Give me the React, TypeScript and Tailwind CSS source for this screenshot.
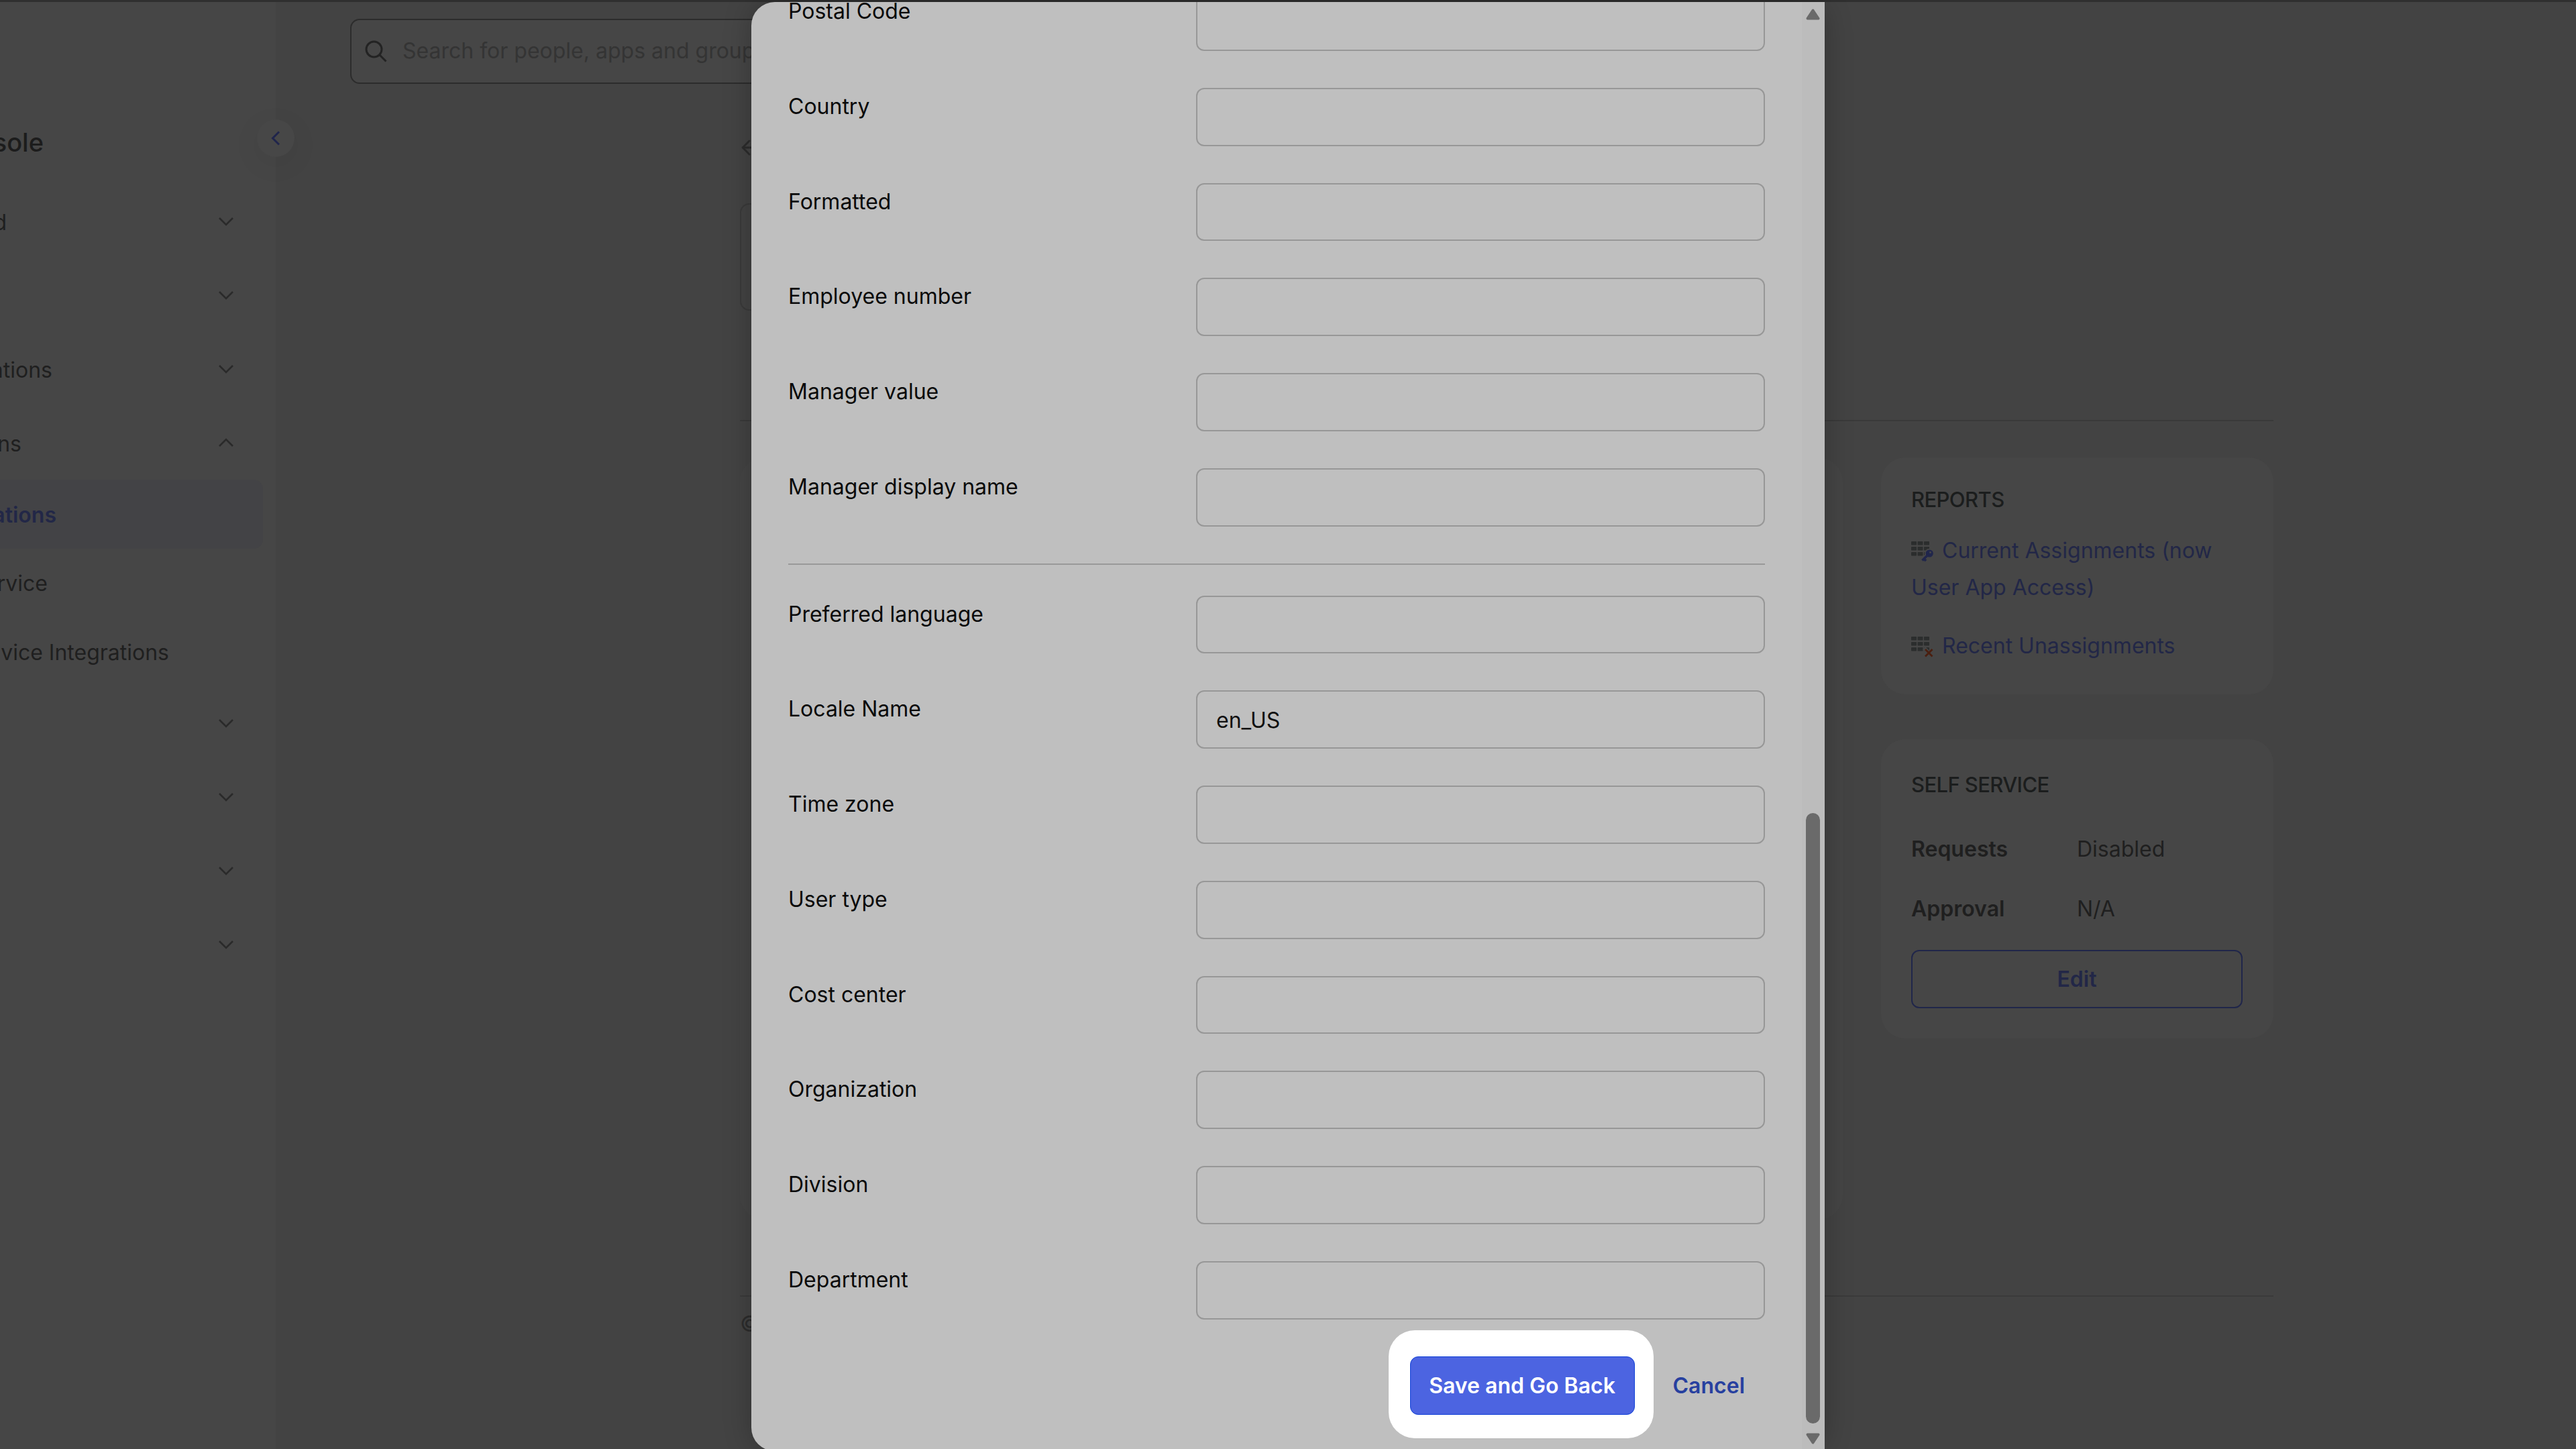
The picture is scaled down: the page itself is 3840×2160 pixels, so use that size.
import { ArrowLeft } from 'lucide-react';
import type { ReactNode } from 'react';

type NavItem = { label: string; labelWidth: string; open?: boolean };

const topItems: NavItem[] = [
  { label: 'd', labelWidth: 'w-[10px]' },
  { label: '', labelWidth: 'w-[10px]' },
  { label: 'ations', labelWidth: 'w-[78px]' },
  { label: 'ns', labelWidth: 'w-[32px]', open: true },
];

const subItems = [
  { label: 'ations', labelWidth: 'w-[84px]', active: true },
  { label: 'rvice', labelWidth: 'w-[71px]', active: false },
  { label: 'vice Integrations', labelWidth: 'w-[252px]', active: false },
];

const addressFields = ['Country', 'Formatted', 'Employee number', 'Manager value', 'Manager display name'];

const profileFields = [
  { label: 'Preferred language', value: '' },
  { label: 'Locale Name', value: 'en_US' },
  { label: 'Time zone', value: '' },
  { label: 'User type', value: '' },
  { label: 'Cost center', value: '' },
  { label: 'Organization', value: '' },
  { label: 'Division', value: '' },
  { label: 'Department', value: '' },
];

function Chevron({ open = false }: { open?: boolean }) {
  return (
    <svg width="24" height="14" viewBox="0 0 24 14" fill="none" stroke="#2a2a2a" strokeWidth="2.6">
      <path d={open ? 'M2 12 L12 2 L22 12' : 'M2 2 L12 12 L22 2'} />
    </svg>
  );
}

// Right aligned, so that the start of a long label slides out of view
function ClippedLabel({ width, className = '', children }: { width: string; className?: string; children: ReactNode }) {
  return (
    <span className={`flex shrink-0 justify-end overflow-hidden whitespace-nowrap ${width} ${className}`}>
      <span>{children}</span>
    </span>
  );
}

function NavRow({ label, labelWidth, open }: NavItem) {
  return (
    <div className="flex h-[110px] items-center justify-between pr-[62px]">
      <ClippedLabel width={labelWidth} className="pt-[3px] text-[#1f1f1f]">{label}</ClippedLabel>
      <Chevron open={open} />
    </div>
  );
}

function Sidebar() {
  return (
    <aside className="relative w-[411px] shrink-0 bg-[#464646]">
      <div className="flex h-[272px] items-start pt-[183px]">
        <ClippedLabel width="w-[65px]" className="text-[38px] leading-[52px] font-medium text-[#1c1c1c]">sole</ClippedLabel>
      </div>
      {topItems.map((item, i) => (
        <NavRow key={i} {...item} />
      ))}
      <div>
        {subItems.map((item, i) => (
          <div
            key={i}
            className={`mr-[19px] flex h-[102.5px] items-center rounded-r-[14px] ${item.active ? 'bg-[#434346] font-semibold text-[#222747]' : 'text-[#1f1f1f]'}`}
          >
            <ClippedLabel width={item.labelWidth} className="pt-[3px]">{item.label}</ClippedLabel>
          </div>
        ))}
      </div>
      {[0, 1, 2, 3].map((i) => (
        <NavRow key={i} label="" labelWidth="w-[10px]" />
      ))}

      <button className="absolute top-[175px] -right-[28px] z-10 flex size-14 items-center justify-center rounded-full bg-[#474747] shadow-[0_10px_40px_6px_rgba(0,0,0,0.04)]">
        <svg width="14" height="22" viewBox="0 0 14 22" fill="none" stroke="#20254c" strokeWidth="3">
          <path d="M12 1.5 L2.5 11 L12 20.5" />
        </svg>
      </button>
    </aside>
  );
}

function GridIcon({ children }: { children: ReactNode }) {
  return (
    <svg className="mr-[13px] inline-block align-[-6px]" width="33" height="31" viewBox="0 0 33 31">
      {[0, 8, 16].map((y) =>
        [0, 9.5, 19].map((x) => <rect key={`${x}-${y}`} x={x} y={y} width="8" height="5.5" rx="0.8" fill="#2b2d2d" />),
      )}
      {children}
    </svg>
  );
}

function SideCard({ title, className, children }: { title: string; className: string; children: ReactNode }) {
  return (
    <section className={`w-[585px] rounded-[36px] bg-[#464646] px-[45px] ${className}`}>
      <h3 className="text-[31px] leading-[40px] font-medium tracking-[-0.6px] text-[#1b1d1d]">{title}</h3>
      {children}
    </section>
  );
}

function MainContent() {
  return (
    <main className="flex min-w-0 flex-1 flex-col bg-[#434343]">
      <div className="mt-[25px] ml-[111px] flex h-[97px] w-[900px] items-center rounded-[14px] border-2 border-[#2c2c2c] bg-[#464646] pl-5">
        <svg width="33" height="33" viewBox="0 0 33 33" fill="none" stroke="#232323" strokeWidth="3">
          <circle cx="13.5" cy="13.5" r="11.5" />
          <path d="M21.5 21.5 L31.5 31.5" />
        </svg>
        <span className="ml-[23px] pb-[2px] whitespace-nowrap text-[#343434]">Search for people, apps and groups</span>
      </div>

      <div className="ml-[692px] w-[2286px]">
        <ArrowLeft className="mt-[78px] -ml-[3px] h-[34px] w-[34px] text-[#2c2c2c]" />
        <div className="mt-[66px] h-[160px] w-[1600px] rounded-[14px] border-2 border-[#3a3a3a]" />
        <hr className="mt-[163px] border-t-2 border-[#3a3a3a]" />
        <div className="mt-[54px] flex h-[1249px] justify-between">
          <div className="h-[1136px] w-[1644px] rounded-[36px] bg-[#454545]" />
          <div className="flex flex-col gap-[67px]">
            <SideCard title="REPORTS" className="h-[353px] pt-[43px]">
              <p className="mt-[28px] leading-[55px] text-[#222747]">
                <GridIcon>
                  <circle cx="27" cy="18" r="7.2" fill="#464646" />
                  <path d="M26 19 L17 28" stroke="#464646" strokeWidth="7" />
                  <circle cx="27.2" cy="18" r="5.6" fill="#20264c" />
                  <path d="M26 19 L16.5 28.5 M19 26 L22 29" stroke="#20264c" strokeWidth="3.6" />
                  <circle cx="28.5" cy="16.5" r="1.4" fill="#464646" />
                </GridIcon>
                Current Assignments (now User App Access)
              </p>
              <p className="mt-8 leading-[55px] whitespace-nowrap text-[#222747]">
                <GridIcon>
                  <path d="M19 17 L26 24" stroke="#464646" strokeWidth="6" />
                  <path d="M21 19 L31.5 29.5 M31.5 19 L21 29.5" stroke="#4a1f10" strokeWidth="2.8" />
                </GridIcon>
                Recent Unassignments
              </p>
            </SideCard>

            <SideCard title="SELF SERVICE" className="h-[446px] pt-[48px] text-[#1f1f1f]">
              <div className="mt-[51px] flex h-[50px] items-center">
                <span className="w-[247px] font-semibold">Requests</span>
                <span>Disabled</span>
              </div>
              <div className="mt-[39px] flex h-[50px] items-center">
                <span className="w-[247px] font-semibold">Approval</span>
                <span>N/A</span>
              </div>
              <button className="mt-9 h-[87px] w-[494px] rounded-xl border-2 border-[#20264a] font-semibold text-[#222747]">Edit</button>
            </SideCard>
          </div>
        </div>
        <hr className="border-t-2 border-[#3a3a3a]" />
        <p className="mt-[19px] leading-[44px] text-[#2c2c2c]">©</p>
      </div>
    </main>
  );
}

function Field({ label, value = '' }: { label: string; value?: string }) {
  return (
    <div className="flex h-[86.75px] shrink-0 justify-between">
      <label className="pt-[6px] leading-[44px] text-[#0a0a0a]">{label}</label>
      <input
        readOnly
        value={value}
        className="h-full w-[848px] rounded-xl border-2 border-[#979797] px-7 pt-px text-[#101010] outline-none"
      />
    </div>
  );
}

function ScrollBar() {
  return (
    <div className="flex w-[34px] shrink-0 flex-col items-center bg-[#bcbcbc] pt-[10px] pr-px">
      <svg width="21" height="17" viewBox="0 0 21 17" fill="#6a6a6a" stroke="#6a6a6a" strokeWidth="4" strokeLinejoin="round">
        <path d="M10.5 2.5 L18.5 14.5 L2.5 14.5 Z" />
      </svg>
      <div className="mt-[1182px] h-[910px] w-[21px] rounded-full bg-[#6a6a6a]" />
      <svg className="mt-[14px]" width="21" height="17" viewBox="0 0 21 17" fill="#6a6a6a" stroke="#6a6a6a" strokeWidth="4" strokeLinejoin="round">
        <path d="M10.5 14.5 L18.5 2.5 L2.5 2.5 Z" />
      </svg>
    </div>
  );
}

function AssignDialog() {
  return (
    <div className="absolute top-[3px] left-[1120px] flex h-[2160px] w-[1600px] overflow-hidden rounded-l-[35px] bg-[#bfbfbf]">
      <div className="-mt-[14px] flex flex-1 flex-col gap-[55px] pr-[55px] pl-[55px]">
        <Field label="Postal Code" />
        {addressFields.map((label) => (
          <Field key={label} label={label} />
        ))}
        <hr className="shrink-0 border-t-2 border-[#999999]" />
        <div className="-mt-[9px] flex flex-col gap-[55px]">
          {profileFields.map((field) => (
            <Field key={field.label} {...field} />
          ))}
        </div>
        <div className="-mt-[39px] flex items-center justify-end pr-[30px] font-semibold">
          <div className="mr-[29px] rounded-[39px] bg-white pt-[39px] pr-[28px] pb-[35px] pl-8">
            <button className="h-[87px] w-[335px] rounded-xl border border-[#0d3ed6] bg-[#4c64e1] pt-px text-white">Save and Go Back</button>
          </div>
          <button className="pt-[5px] text-[#27409f]">Cancel</button>
        </div>
      </div>
      <ScrollBar />
    </div>
  );
}

export default function App() {
  return (
    <div className="relative h-[2160px] w-[3840px] overflow-hidden bg-[#2f2f2f] pt-[3px] font-['Inter',sans-serif] text-[32px]">
      <div className="flex h-full">
        <Sidebar />
        <MainContent />
      </div>
      <div className="absolute top-[3px] left-[1120px] h-[2160px] w-[1600px] rounded-[35px] shadow-[0_0_40px_rgba(0,0,0,0.25)]" />
      <AssignDialog />
    </div>
  );
}
